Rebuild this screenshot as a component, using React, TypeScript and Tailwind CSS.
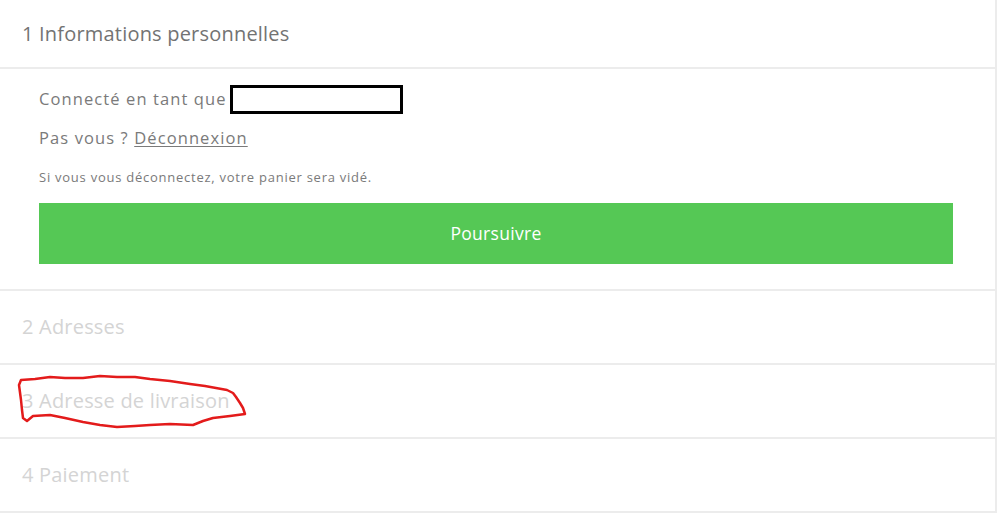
export default function App() {
  const steps = [
    { n: 2, label: "Adresses" },
    { n: 3, label: "Adresse de livraison", circled: true },
    { n: 4, label: "Paiement" },
  ];

  return (
    <div className="w-[1000px] h-[519px] bg-white font-['Open_Sans',sans-serif] overflow-hidden">
      <div className="w-[997px] border-r-2 border-[#ececec]">
        {/* Step 1: open */}
        <section className="border-b-2 border-[#ececec]">
          <h1 className="h-[69px] flex items-center pl-[22px] text-[20px] tracking-[0.2px] text-[#737373] border-b-2 border-[#ececec]">
            1 Informations personnelles
          </h1>
          <div className="pl-[39px] pr-[42px] pt-[15px] pb-[25px] text-[#7a7a7a]">
            <p className="flex items-center text-[16.5px] tracking-[1.1px] h-[30px]">
              Connecté en tant que
              <span className="inline-block w-[173px] h-[29px] ml-[3px] border-[3px] border-black" />
            </p>
            <p className="text-[16.5px] tracking-[1.1px] mt-[12px] h-[24px] leading-[24px]">
              Pas vous ?{" "}
              <a href="#" className="underline underline-offset-2">
                Déconnexion
              </a>
            </p>
            <p className="text-[13px] tracking-[0.75px] mt-[18px] h-[18px] leading-[18px]">
              Si vous vous déconnectez, votre panier sera vidé.
            </p>
            <button className="mt-[17px] w-full h-[61px] bg-[#55c855] text-white text-[17.5px] tracking-[0.3px]">
              Poursuivre
            </button>
          </div>
        </section>

        {/* Remaining steps */}
        {steps.map((s) => (
          <section
            key={s.n}
            className="relative h-[74px] flex items-center pl-[22px] border-b-2 border-[#ececec] text-[20px] tracking-[0.2px] text-[#d4d4d4]"
          >
            {s.n} {s.label}
            {s.circled && (
              <svg
                className="absolute left-0 top-0 pointer-events-none"
                width="260"
                height="74"
                viewBox="0 365 260 74"
              >
                <path
                  d="M19 385 L21 380 L35 379 L50 377 L65 378 L83 378 L100 376 L117 377 L135 377 L150 379 L170 381 L190 384 L205 386 L227 390 L233 393 L236 397 L240 403 L243 408 L245 414 L230 416 L213 418 L203 421 L193 425 L170 424 L150 425 L135 426 L117 427 L100 425 L83 422 L65 418 L50 415 L33 416 L27 421 L23 418 L22 410 L21 400 Z"
                  fill="none"
                  stroke="#e31b1b"
                  strokeWidth="2.5"
                  strokeLinejoin="round"
                />
              </svg>
            )}
          </section>
        ))}
      </div>
    </div>
  );
}
